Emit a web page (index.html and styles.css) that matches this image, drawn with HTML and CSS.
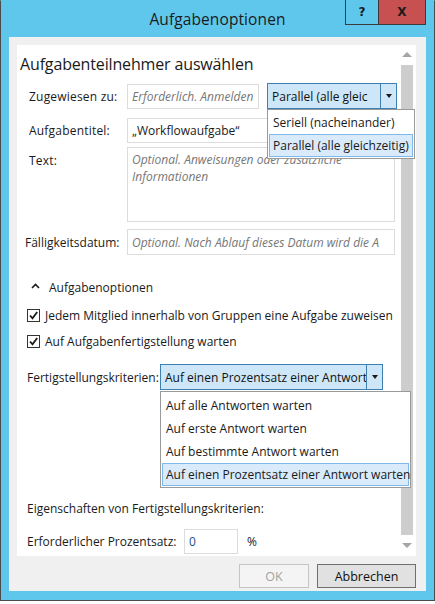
FILE: index.html
```html
<!DOCTYPE html>
<html lang="de">
<head>
<meta charset="utf-8">
<title>Aufgabenoptionen</title>
<link rel="stylesheet" href="styles.css">
</head>
<body>
<div class="window">
  <div class="titlebar">
    <div class="title">Aufgabenoptionen</div>
    <div class="caption-btns">
      <div class="cbtn help">?</div>
      <div class="cbtn close">X</div>
    </div>
  </div>
  <div class="client">
    <div class="panel">
      <div class="scrollarea">
        <h1 class="heading">Aufgabenteilnehmer auswählen</h1>

        <div class="row row-assign">
          <div class="label">Zugewiesen zu:</div>
          <div class="field split">
            <div class="input short ph">Erforderlich. Anmelden</div>
            <div class="combo-wrap">
              <div class="combo small"><span class="combo-text">Parallel (alle gleic</span><span class="combo-btn"><span class="tri"></span></span></div>
              <div class="list list-small">
                <div class="item">Seriell (nacheinander)</div>
                <div class="item sel">Parallel (alle gleichzeitig)</div>
              </div>
            </div>
          </div>
        </div>

        <div class="row row-title">
          <div class="label">Aufgabentitel:</div>
          <div class="field">
            <div class="input">„Workflowaufgabe“</div>
          </div>
        </div>

        <div class="row row-text">
          <div class="label top">Text:</div>
          <div class="field">
            <div class="input area ph">Optional. Anweisungen oder zusätzliche Informationen</div>
          </div>
        </div>

        <div class="row row-date">
          <div class="label wide">Fälligkeitsdatum:</div>
          <div class="field">
            <div class="input ph nowrap">Optional. Nach Ablauf dieses Datum wird die A</div>
          </div>
        </div>

        <div class="section">
          <svg class="chev" width="9" height="6" viewBox="0 0 9 6"><path d="M1 5 L4.5 1.5 L8 5" fill="none" stroke="#1a1a1a" stroke-width="1.6"/></svg>
          <span>Aufgabenoptionen</span>
        </div>

        <div class="check first">
          <span class="box"><svg width="11" height="11" viewBox="0 0 11 11"><path d="M2 5.5 L4.5 8.3 L9.2 2" fill="none" stroke="#1a1a1a" stroke-width="1.8"/></svg></span>
          <span>Jedem Mitglied innerhalb von Gruppen eine Aufgabe zuweisen</span>
        </div>
        <div class="check second">
          <span class="box"><svg width="11" height="11" viewBox="0 0 11 11"><path d="M2 5.5 L4.5 8.3 L9.2 2" fill="none" stroke="#1a1a1a" stroke-width="1.8"/></svg></span>
          <span>Auf Aufgabenfertigstellung warten</span>
        </div>

        <div class="crit">
          <div class="crit-label">Fertigstellungskriterien:</div>
          <div class="combo-wrap">
            <div class="combo big"><span class="combo-text">Auf einen Prozentsatz einer Antwort</span><span class="combo-btn"><span class="tri"></span></span></div>
            <div class="list list-big">
              <div class="item">Auf alle Antworten warten</div>
              <div class="item">Auf erste Antwort warten</div>
              <div class="item">Auf bestimmte Antwort warten</div>
              <div class="item sel">Auf einen Prozentsatz einer Antwort warten</div>
            </div>
          </div>
        </div>

        <div class="props">Eigenschaften von Fertigstellungskriterien:</div>

        <div class="pct">
          <span class="pct-label">Erforderlicher Prozentsatz:</span>
          <span class="input pct-input">0</span>
          <span class="pct-sign">%</span>
        </div>
      </div>
      <div class="scrollbar">
        <span class="sarrow up"></span>
        <span class="thumb"></span>
        <span class="sarrow down"></span>
      </div>
    </div>
    <div class="buttons">
      <div class="btn disabled">OK</div>
      <div class="btn cancel">Abbrechen</div>
    </div>
  </div>
</div>
</body>
</html>
```

FILE: styles.css
```css
* { box-sizing: border-box; }
html, body { margin: 0; padding: 0; background: #ffffff; }
body {
  font-family: "Open Sans", "Noto Sans", sans-serif;
  font-size: 12px;
  color: #1a1a1a;
}

.window {
  width: 435px;
  height: 601px;
  background: #5fc7ec;
  border: 1px solid #4b4b4b;
  border-top-color: #5fc7ec;
  display: flex;
  flex-direction: column;
}

.titlebar {
  height: 36px;
  position: relative;
  display: flex;
  align-items: center;
  justify-content: center;
}
.title {
  font-size: 15.5px;
  color: #1b1b1b;
  letter-spacing: 0.1px;
  margin-top: -1px;
}
.caption-btns {
  position: absolute;
  top: -1px;
  right: 8px;
  display: flex;
  border: 1px solid #3b3b3b;
  border-top: none;
}
.cbtn {
  height: 24px;
  display: flex;
  align-items: center;
  justify-content: center;
  font-family: "DejaVu Sans", sans-serif;
  font-weight: bold;
  font-size: 12px;
  color: #1a1a1a;
}
.help { width: 33px; background: #5fc7ec; border-right: 1px solid #3b3b3b; }
.close { width: 46px; background: #c75050; }

.client {
  margin: 0 8px 0 8px;
  background: #f0f0f0;
  padding: 8px 10px 3px 8px;
  height: 554px;
}

.panel {
  height: 511px;
  background: #ffffff;
  display: flex;
}
.scrollarea {
  flex: 1;
  position: relative;
  padding-left: 3px;
}

.heading {
  margin: 8px 0 0 0;
  font-size: 16px;
  font-weight: normal;
  line-height: 22px;
  letter-spacing: -0.15px;
}

.row {
  display: flex;
  padding-left: 9px;
}
.row-assign { margin-top: 9px; }
.row-title { margin-top: 9px; }
.row-text { margin-top: 4px; }
.row-date { margin-top: 7px; }

.label {
  width: 98px;
  flex: none;
  display: flex;
  align-items: center;
  letter-spacing: 0.2px;
}
.label.top { align-items: flex-start; padding-top: 5px; }
.label.wide { margin-left: -4px; width: 102px; white-space: nowrap; letter-spacing: 0; }

.field { width: 270px; display: flex; }
.field.split { gap: 8px; }

.input {
  height: 25px;
  width: 268px;
  border: 1px solid #dcdcdc;
  background: #fff;
  padding: 0 4px;
  display: flex;
  align-items: center;
  white-space: nowrap;
  overflow: hidden;
}
.input.short { width: 133px; }
.ph { color: #767676; font-style: italic; }
.input.area {
  height: 75px;
  white-space: normal;
  align-items: flex-start;
  padding-top: 3px;
  line-height: 17px;
}
.row-date .input { height: 26px; }

.combo-wrap { position: relative; }
.combo {
  height: 26px;
  background: #cde7f8;
  border: 1px solid #3d7fb0;
  display: flex;
  align-items: stretch;
}
.combo.small { width: 130px; margin-top: -1px; }
.combo.big { width: 223px; }
.combo-text {
  flex: 1;
  padding-left: 4px;
  display: flex;
  align-items: center;
  white-space: nowrap;
  overflow: hidden;
  color: #111;
}
.combo-btn {
  width: 16px;
  border-left: 1px solid #3d7fb0;
  display: flex;
  align-items: center;
  justify-content: center;
}
.tri {
  width: 0; height: 0;
  border-left: 3.5px solid transparent;
  border-right: 3.5px solid transparent;
  border-top: 4px solid #1a1a1a;
}

.list {
  position: absolute;
  left: 0;
  background: #fff;
  border: 1px solid #9a9a9a;
  padding: 1px;
  z-index: 5;
}
.list-small { top: 25px; width: 148px; }
.list-big { top: 27px; width: 251px; padding-top: 2px; }
.item {
  height: 23px;
  display: flex;
  align-items: center;
  padding-left: 3px;
  white-space: nowrap;
  border: 1px solid transparent;
}
.item.sel { background: #d9ebfb; border-color: #80b8ea; }

.section {
  margin-top: 24px;
  padding-left: 11px;
  display: flex;
  align-items: center;
  height: 16px;
}
.chev { margin-right: 9px; margin-top: -2px; }

.check {
  display: flex;
  align-items: center;
  padding-left: 7px;
  height: 18px;
}
.check.first { margin-top: 11px; }
.check.second { margin-top: 8px; }
.box {
  width: 13px; height: 13px;
  border: 1px solid #333;
  background: #fff;
  margin-right: 5px;
  display: flex;
  align-items: center;
  justify-content: center;
}

.crit {
  display: flex;
  align-items: center;
  padding-left: 7px;
  margin-top: 14px;
}
.crit-label { width: 133px; }

.props {
  padding-left: 7px;
  margin-top: 110px;
}

.pct {
  display: flex;
  align-items: center;
  padding-left: 7px;
  margin-top: 12px;
}
.pct-label { width: 157px; }
.pct-input { width: 54px; color: #1f4f8a; font-style: normal; }
.pct-sign { margin-left: 9px; color: #1a1a1a; }

.scrollbar {
  width: 18px;
  flex: none;
  display: flex;
  flex-direction: column;
  align-items: center;
  padding: 7px 0 8px 0;
}
.sarrow {
  width: 0; height: 0;
  border-left: 5px solid transparent;
  border-right: 5px solid transparent;
}
.sarrow.up { border-bottom: 5px solid #a6a6a6; }
.sarrow.down { border-top: 5px solid #a6a6a6; }
.thumb {
  flex: 1;
  width: 12px;
  background: #cdcdcd;
  margin: 8px 0 8px 0;
}

.buttons {
  display: flex;
  justify-content: flex-end;
  gap: 8px;
  margin-top: 8px;
}
.btn {
  height: 24px;
  display: flex;
  align-items: center;
  justify-content: center;
  font-size: 12.5px;
}
.btn.disabled {
  width: 70px;
  background: #f4f4f4;
  border: 1px solid #c4c4c4;
  color: #a3a3a3;
}
.btn.cancel {
  width: 99px;
  background: #e1e1e1;
  border: 1px solid #6f6f6f;
  color: #111;
}
```
